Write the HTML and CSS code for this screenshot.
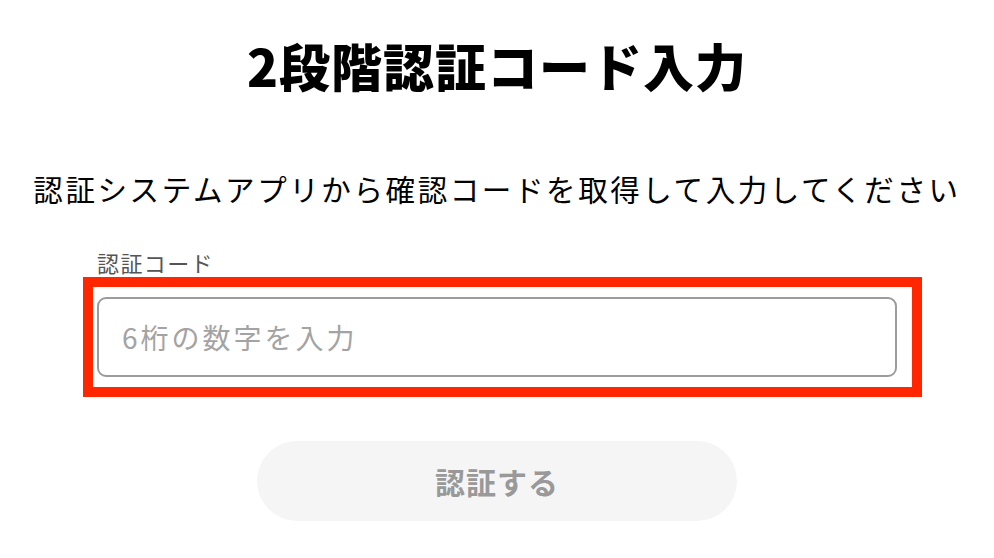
FILE: index.html
```html
<!DOCTYPE html>
<html lang="ja">
<head>
<meta charset="utf-8">
<title>2段階認証コード入力</title>
<link rel="stylesheet" href="styles.css">
</head>
<body>
<main class="page">
  <h1 class="title">2段階認証コード入力</h1>
  <p class="lead">認証システムアプリから確認コードを取得して入力してください</p>
  <form class="form">
    <label class="label" for="code">認証コード</label>
    <div class="field">
      <input class="input" id="code" type="text" placeholder="6桁の数字を入力">
      <span class="highlight"></span>
    </div>
    <button class="submit" type="button">認証する</button>
  </form>
</main>
</body>
</html>
```

FILE: styles.css
```css
html, body {
  margin: 0;
  padding: 0;
  background: #ffffff;
}

body {
  font-family: "Noto Sans CJK JP", "Noto Sans", sans-serif;
  color: #000000;
}

.page {
  display: flex;
  flex-direction: column;
  align-items: center;
  padding-top: 29px;
}

.title {
  margin: 0;
  font-size: 51px;
  line-height: 72px;
  font-weight: 800;
  letter-spacing: 1px;
}

.lead {
  margin: 66px 0 0;
  font-size: 29.5px;
  line-height: 42px;
  letter-spacing: 2.6px;
  font-weight: 400;
}

.form {
  width: 800px;
  margin-top: 38px;
  display: flex;
  flex-direction: column;
  align-items: center;
}

.label {
  align-self: flex-start;
  font-size: 22px;
  line-height: 30px;
  letter-spacing: 1.4px;
  color: #555555;
  padding-left: 0;
}

.field {
  position: relative;
  width: 800px;
  margin-top: 20px;
}

.input {
  display: block;
  box-sizing: border-box;
  width: 100%;
  height: 80px;
  border: 2px solid #9c9c9c;
  border-radius: 9px;
  padding: 0 23px;
  font-family: "Noto Sans CJK JP", "Noto Sans", sans-serif;
  font-size: 28px;
  letter-spacing: 3px;
  color: #333333;
  background: #ffffff;
  outline: none;
}

.input::placeholder {
  color: #a3a3a3;
}

.highlight {
  position: absolute;
  left: -14px;
  top: -20px;
  right: -25px;
  bottom: -20px;
  border: 10px solid #ff2600;
  pointer-events: none;
}

.submit {
  margin-top: 64px;
  width: 480px;
  height: 80px;
  border: none;
  border-radius: 40px;
  background: #f5f5f5;
  color: #999999;
  font-family: "Noto Sans CJK JP", "Noto Sans", sans-serif;
  font-size: 30px;
  font-weight: 700;
  letter-spacing: 1px;
}
```
